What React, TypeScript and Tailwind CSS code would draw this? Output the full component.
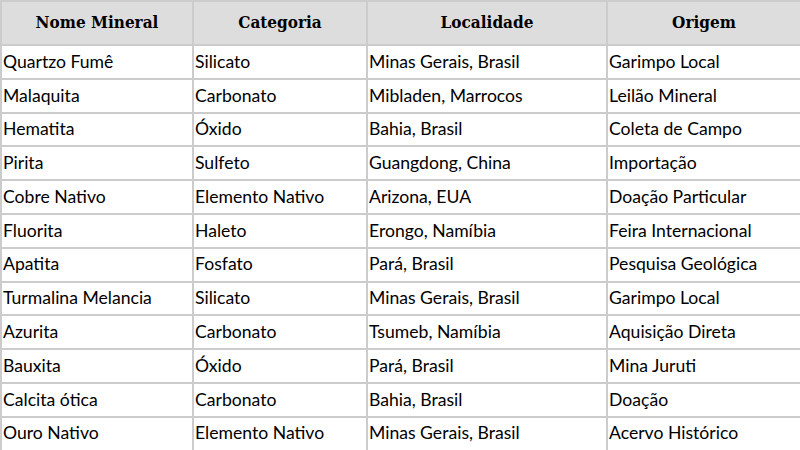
const rows: [string, string, string, string][] = [
  ["Quartzo Fumê", "Silicato", "Minas Gerais, Brasil", "Garimpo Local"],
  ["Malaquita", "Carbonato", "Mibladen, Marrocos", "Leilão Mineral"],
  ["Hematita", "Óxido", "Bahia, Brasil", "Coleta de Campo"],
  ["Pirita", "Sulfeto", "Guangdong, China", "Importação"],
  ["Cobre Nativo", "Elemento Nativo", "Arizona, EUA", "Doação Particular"],
  ["Fluorita", "Haleto", "Erongo, Namíbia", "Feira Internacional"],
  ["Apatita", "Fosfato", "Pará, Brasil", "Pesquisa Geológica"],
  ["Turmalina Melancia", "Silicato", "Minas Gerais, Brasil", "Garimpo Local"],
  ["Azurita", "Carbonato", "Tsumeb, Namíbia", "Aquisição Direta"],
  ["Bauxita", "Óxido", "Pará, Brasil", "Mina Juruti"],
  ["Calcita ótica", "Carbonato", "Bahia, Brasil", "Doação"],
  ["Ouro Nativo", "Elemento Nativo", "Minas Gerais, Brasil", "Acervo Histórico"],
];

const headers = ["Nome Mineral", "Categoria", "Localidade", "Origem"];

export default function App() {
  return (
    <div className="w-[800px] h-[450px] overflow-hidden bg-white">
      <table className="w-[800px] border-collapse table-fixed">
        <colgroup>
          <col className="w-[192px]" />
          <col className="w-[174px]" />
          <col className="w-[240px]" />
          <col className="w-[194px]" />
        </colgroup>
        <thead>
          <tr className="h-[44px] bg-[#dddddd]">
            {headers.map((h) => (
              <th
                key={h}
                className="border-2 border-[#cccccc] px-1 text-center text-[17px] font-bold text-black font-['DejaVu_Serif',serif] [font-stretch:condensed]"
              >
                {h}
              </th>
            ))}
          </tr>
        </thead>
        <tbody>
          {rows.map((r) => (
            <tr key={r[0]} className="h-[33.8px]">
              {r.map((c, i) => (
                <td
                  key={i}
                  className="border-2 border-[#cccccc] px-[1px] py-0 text-left text-[17.6px] text-black font-['Lato',sans-serif] whitespace-nowrap"
                >
                  {c}
                </td>
              ))}
            </tr>
          ))}
        </tbody>
      </table>
    </div>
  );
}
